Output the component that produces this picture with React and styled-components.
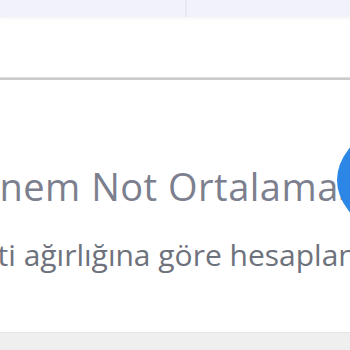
import styled, { createGlobalStyle } from "styled-components";

const GlobalStyle = createGlobalStyle`
  html, body {
    margin: 0;
    padding: 0;
    background: #ffffff;
    overflow: hidden;
  }
  body {
    font-family: "Open Sans", "Noto Sans", sans-serif;
  }
`;

const Page = styled.div`
  width: 350px;
  height: 350px;
  position: relative;
  overflow: hidden;
  display: flex;
  flex-direction: column;
  background: #ffffff;
`;

const TabBar = styled.div`
  display: grid;
  grid-template-columns: 187px 1fr;
  height: 17px;
  background: #f2f2fa;
  box-shadow: 0 1px 4px rgba(0, 0, 0, 0.06);
`;

const Tab = styled.div`
  border-right: ${(p) => (p.$divider ? "2px solid #e8e8f2" : "none")};
`;

const Header = styled.div`
  height: 60px;
`;

const Rule = styled.div`
  height: 2px;
  background: #cbcbcb;
  border-top: 1px solid #dcdcdc;
`;

const Body = styled.div`
  flex: 1;
  display: flex;
  flex-direction: column;
  padding-top: 84px;
`;

const Title = styled.h1`
  margin: 0 0 0 -52px;
  font-size: 38px;
  font-weight: 400;
  line-height: 44px;
  letter-spacing: 0.5px;
  color: #7c808e;
  white-space: nowrap;
`;

const Subtitle = styled.p`
  margin: 29px 0 0 -123px;
  font-size: 30px;
  line-height: 36px;
  color: #6e727c;
  white-space: nowrap;
`;

const Footer = styled.div`
  height: 17px;
  background: #efefef;
  border-top: 1px solid #e6e6e6;
`;

const Badge = styled.div`
  position: absolute;
  left: 337px;
  top: 100px;
  width: 300px;
  height: 160px;
  border-radius: 50%;
  background: #2b86e6;
`;

export default function App() {
  return (
    <Page>
      <GlobalStyle />
      <TabBar>
        <Tab $divider />
        <Tab />
      </TabBar>
      <Header />
      <Rule />
      <Body>
        <Title>Dönem Not Ortalaması</Title>
        <Subtitle>Ders saati ağırlığına göre hesaplanır</Subtitle>
      </Body>
      <Footer />
      <Badge />
    </Page>
  );
}
